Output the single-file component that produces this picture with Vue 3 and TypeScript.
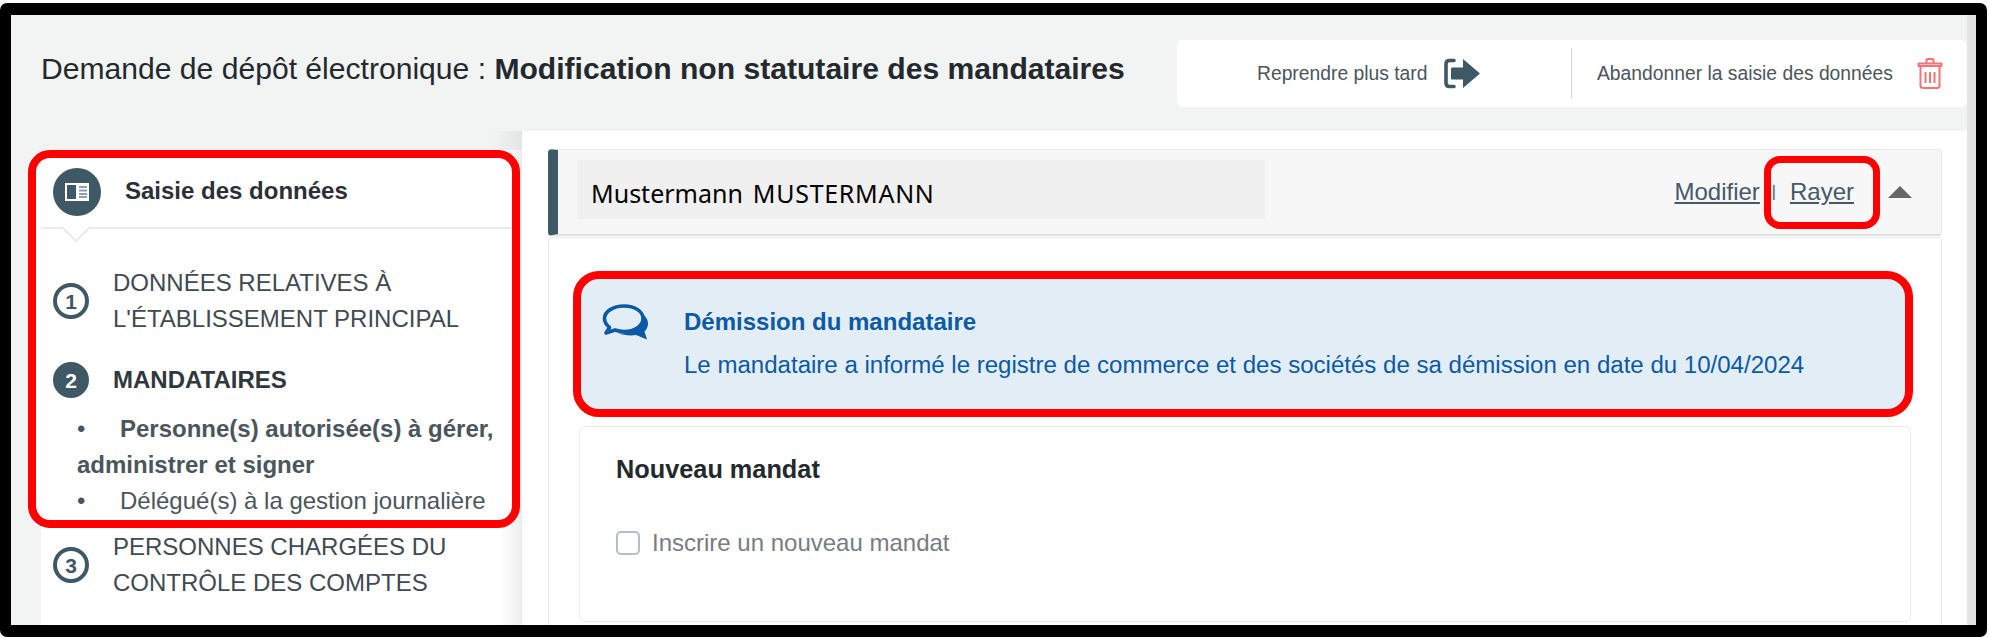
<script setup lang="ts">
interface Step { n: number; lines: string[]; active?: boolean }
const step1: Step = { n: 1, lines: ['DONNÉES RELATIVES À', "L'ÉTABLISSEMENT PRINCIPAL"] }
const step3: Step = { n: 3, lines: ['PERSONNES CHARGÉES DU', 'CONTRÔLE DES COMPTES'] }
</script>

<template>
  <div class="frame">
    <div class="inner">
      <div class="content">
        <header class="top">
          <h1 class="title">Demande de dépôt électronique : <b>Modification non statutaire des mandataires</b></h1>
          <div class="actions">
            <div class="action later">
              <span>Reprendre plus tard</span>
              <svg class="exit" width="38" height="31" viewBox="0 0 38 31">
                <path d="M11 2.500H6.500Q3 2.500 3 6V25Q3 28.500 6.500 28.500H11" fill="none" stroke="#3f5866" stroke-width="3.600" stroke-linecap="round"/>
                <path d="M9 9.500H20V1L37 15.500L20 30V21.500H9Q8 21.500 8 20.500V10.500Q8 9.500 9 9.500Z" fill="#3f5866"/>
              </svg>
            </div>
            <div class="action quit">
              <span>Abandonner la saisie des données</span>
              <svg class="trash" width="26" height="31" viewBox="0 0 26 31">
                <g fill="none" stroke="#ef7377" stroke-width="2" stroke-linejoin="round">
                  <path d="M1.500 8H24.500V5.500H1.500Z"/>
                  <path d="M9.500 5.500V2.500Q9.500 1 11 1H15Q16.500 1 16.500 2.500V5.500"/>
                  <path d="M3.500 8V27.500Q3.500 30 6 30H20Q22.500 30 22.500 27.500V8"/>
                  <path d="M8.500 14V25M13 14V25M17.500 14V25"/>
                </g>
              </svg>
            </div>
          </div>
        </header>

        <div class="body">
          <aside class="side">
            <div class="col">
              <div class="mark">
                <div class="stage">
                  <span class="disc">
                    <svg width="24" height="18" viewBox="0 0 24 18">
                      <rect width="24" height="18" fill="#fff"/>
                      <rect x="2" y="2" width="9" height="14" fill="#3f5866"/>
                      <path d="M14 4H22M14 7.500H22M14 11H22M14 14H22" stroke="#8fa0aa" stroke-width="1.800"/>
                    </svg>
                  </span>
                  <span class="stage-name">Saisie des données</span>
                  <svg class="notch" width="28" height="15" viewBox="0 0 28 15">
                    <path d="M0 0L14 14L28 0" fill="#fff" stroke="#e4e7e8" stroke-width="1.500"/>
                  </svg>
                </div>
                <div class="step one">
                  <span class="num">{{ step1.n }}</span>
                  <span class="label">{{ step1.lines[0] }}<br />{{ step1.lines[1] }}</span>
                </div>
                <div class="step two">
                  <span class="num solid">2</span>
                  <span class="label"><b>MANDATAIRES</b></span>
                </div>
                <div class="subs">
                  <div class="row bold"><span class="dot">•</span><span>Personne(s) autorisée(s) à gérer,</span></div>
                  <div class="row bold"><span>administrer et signer</span></div>
                  <div class="row"><span class="dot">•</span><span>Délégué(s) à la gestion journalière</span></div>
                </div>
              </div>
              <div class="step three">
                <span class="num">{{ step3.n }}</span>
                <span class="label">{{ step3.lines[0] }}<br />{{ step3.lines[1] }}</span>
              </div>
            </div>
          </aside>

          <main class="main">
            <div class="card-head">
              <div class="name"><span>Mustermann</span><span class="last">MUSTERMANN</span></div>
              <div class="links">
                <a>Modifier</a>
                <span class="sep">|</span>
                <span class="rayer"><a>Rayer</a></span>
                <span class="caret"></span>
              </div>
            </div>
            <div class="card-body">
              <div class="notice">
                <svg class="chat" width="47" height="36" viewBox="0 0 47 36">
                  <path d="M22 2C11 2 2.500 7.500 2.500 14.500C2.500 18.500 4.500 21 7.500 23.500L4 29L13 26C16 27 19 27.500 22 27.500C33 27.500 41 21.500 41 14.500C41 7.500 33 2 22 2Z" fill="none" stroke="#0b5aa5" stroke-width="3.600" stroke-linejoin="round"/>
                  <path d="M37.500 8C43 11 46 15 46 19.500C46 23 44.500 25.500 42.500 27.500L45 35.500L34 31C28 32 21 31 16 29.500C28 30 40 25 41 15C41.200 12.500 39.500 10 37.500 8Z" fill="#0b5aa5"/>
                </svg>
                <div class="notice-text">
                  <h3>Démission du mandataire</h3>
                  <p>Le mandataire a informé le registre de commerce et des sociétés de sa démission en date du 10/04/2024</p>
                </div>
              </div>
              <section class="mandate">
                <h2>Nouveau mandat</h2>
                <label class="check"><span class="box"></span>Inscrire un nouveau mandat</label>
              </section>
            </div>
          </main>
        </div>
      </div>
      <div class="strip"></div>
    </div>
  </div>
</template>

<style>
html, body { margin: 0; background: #fff; }
</style>

<style scoped>
.frame {
  box-sizing: border-box;
  width: 1987px;
  height: 634px;
  margin-top: 3px;
  border: solid #000;
  border-width: 12px 11px;
  border-radius: 7px;
  overflow: hidden;
  font-family: "Liberation Sans", Arial, sans-serif;
  color: #3f4a52;
}
.inner { display: flex; height: 100%; background: #f2f4f4; }
.content { flex: 1; min-width: 0; display: flex; flex-direction: column; }
.strip { width: 9px; background: #e4e6e6; }

.top { height: 116px; display: flex; align-items: flex-start; box-sizing: border-box; flex: none; }
.title { margin: 36px 0 0 30px; font-size: 30.100px; line-height: 36px; font-weight: 400; color: #24292d; white-space: nowrap; flex: 1; }
.title b { font-weight: 700; }
.actions { display: flex; align-items: center; width: 790px; height: 67px; margin-top: 25px; background: #fff; border-radius: 6px; flex: none; font-size: 19.3px; color: #4b555c; }
.action { display: flex; align-items: center; height: 51px; white-space: nowrap; }
.later { width: 395px; padding-left: 80px; box-sizing: border-box; gap: 16px; border-right: 1px solid #d5d8da; }
.quit { padding-left: 25px; gap: 24px; }

.body { flex: 1; min-height: 0; display: flex; }
.side { width: 511px; flex: none; box-sizing: border-box; padding-left: 30px; background: linear-gradient(to right, transparent 480px, #e4e6e6 511px); }
.col { height: 100%; box-sizing: border-box; padding-top: 19px; background: linear-gradient(to bottom, transparent 19px, #fff 19px); position: relative; }
.col::after { content: ""; position: absolute; right: 0; top: 19px; bottom: 0; width: 22px; background: linear-gradient(to right, rgba(236, 238, 238, 0), #eceeee); pointer-events: none; }
.mark { box-sizing: border-box; width: 492px; height: 378px; margin-left: -13px; border: 8px solid #f00; border-radius: 22px; background: #fff; position: relative; z-index: 1; }
.stage { height: 69px; display: flex; align-items: center; padding-left: 12px; position: relative; border-bottom: 2px solid #e9ecec; margin: 0 0 0 5px; }
.disc { width: 48px; height: 48px; border-radius: 50%; background: #3f5866; display: flex; align-items: center; justify-content: center; position: relative; top: -1px; }
.stage-name { margin-left: 24px; font-size: 24px; font-weight: 700; color: #2a3036; position: relative; top: -2px; }
.notch { position: absolute; left: 21px; bottom: -15px; }

.step { display: flex; align-items: center; font-size: 24px; line-height: 36px; color: #3f4a52; white-space: nowrap; }
.one { margin: 36px 0 0 17px; }
.two { margin: 25px 0 0 17px; }
.three { margin: 0 0 0 12px; position: relative; z-index: 1; padding-top: 1px; }
.num { width: 36px; height: 36px; box-sizing: border-box; border: 4px solid #3f5866; border-radius: 50%; display: flex; align-items: center; justify-content: center; font-size: 21px; line-height: 1; font-weight: 700; color: #3f5866; flex: none; margin-right: 24px; }
.solid { background: #3f5866; color: #fff; }
.two .label b { color: #2f383f; }

.subs { margin: 13px 0 0 41px; font-size: 24px; line-height: 36px; color: #4b555c; white-space: nowrap; }
.row { display: flex; }
.bold { font-weight: 700; }
.dot { display: inline-block; width: 43px; font-weight: 400; flex: none; }

.main { flex: 1; min-width: 0; background: #fff; padding: 18px 25px 0 26px; box-sizing: border-box; overflow: hidden; }
.card-head { box-sizing: border-box; height: 87px; display: flex; align-items: center; justify-content: space-between; background: #f7f7f7; border: 1px solid #e8e9e9; border-left: 10px solid #3f5866; border-bottom: 2px solid #dfe1e1; border-radius: 4px; padding-left: 19px; }
.name { width: 688px; height: 59px; box-sizing: border-box; padding: 8px 0 0 14px; display: flex; align-items: center; background: #f0f0f0; font-family: "Noto Sans", "Open Sans", sans-serif; font-size: 25px; color: #000; position: relative; top: -3px; }
.last { margin-left: 10px; letter-spacing: 0.7px; }
.links { display: flex; align-items: center; font-size: 24px; color: #45596a; }
.links a { text-decoration: underline; }
.sep { margin: 0 13px 0 12px; font-size: 16px; }
.rayer { display: flex; align-items: center; justify-content: center; box-sizing: border-box; width: 116px; height: 73px; margin: 0 0 0 -25px; border: 7px solid #f00; border-radius: 16px; }
.caret { width: 0; height: 0; margin: 0 29px 0 8px; border-left: 12px solid transparent; border-right: 12px solid transparent; border-bottom: 12px solid #666; }

.card-body { height: 400px; margin-top: 1px; border: 1px solid #e6e9eb; border-radius: 4px; box-sizing: border-box; padding: 33px 28px 0 24px; }
.notice { box-sizing: border-box; height: 146px; display: flex; border: 8px solid #f00; border-radius: 26px; background: #e3edf6; color: #0b5aa5; padding: 28px 0 0 21px; }
.chat { flex: none; margin-top: -3px; }
.notice-text { margin-left: 35px; }
.notice h3 { margin: 0; font-size: 24px; line-height: 30px; font-weight: 700; }
.notice p { margin: 13px 0 0; font-size: 24.050px; line-height: 30px; white-space: nowrap; }
.mandate { box-sizing: border-box; height: 196px; margin: 9px 2px 0 6px; border: 1px solid #e9ecee; border-radius: 6px; padding: 27px 0 0 36px; }
.mandate h2 { margin: 0; font-size: 25.300px; line-height: 30px; font-weight: 700; color: #24292d; }
.check { display: flex; align-items: center; gap: 12px; margin: 44px 0 0 0; font-size: 24px; line-height: 30px; color: #777d82; }
.box { width: 24px; height: 24px; box-sizing: border-box; border: 2px solid #b4bec6; border-radius: 5px; background: #fff; }
</style>
